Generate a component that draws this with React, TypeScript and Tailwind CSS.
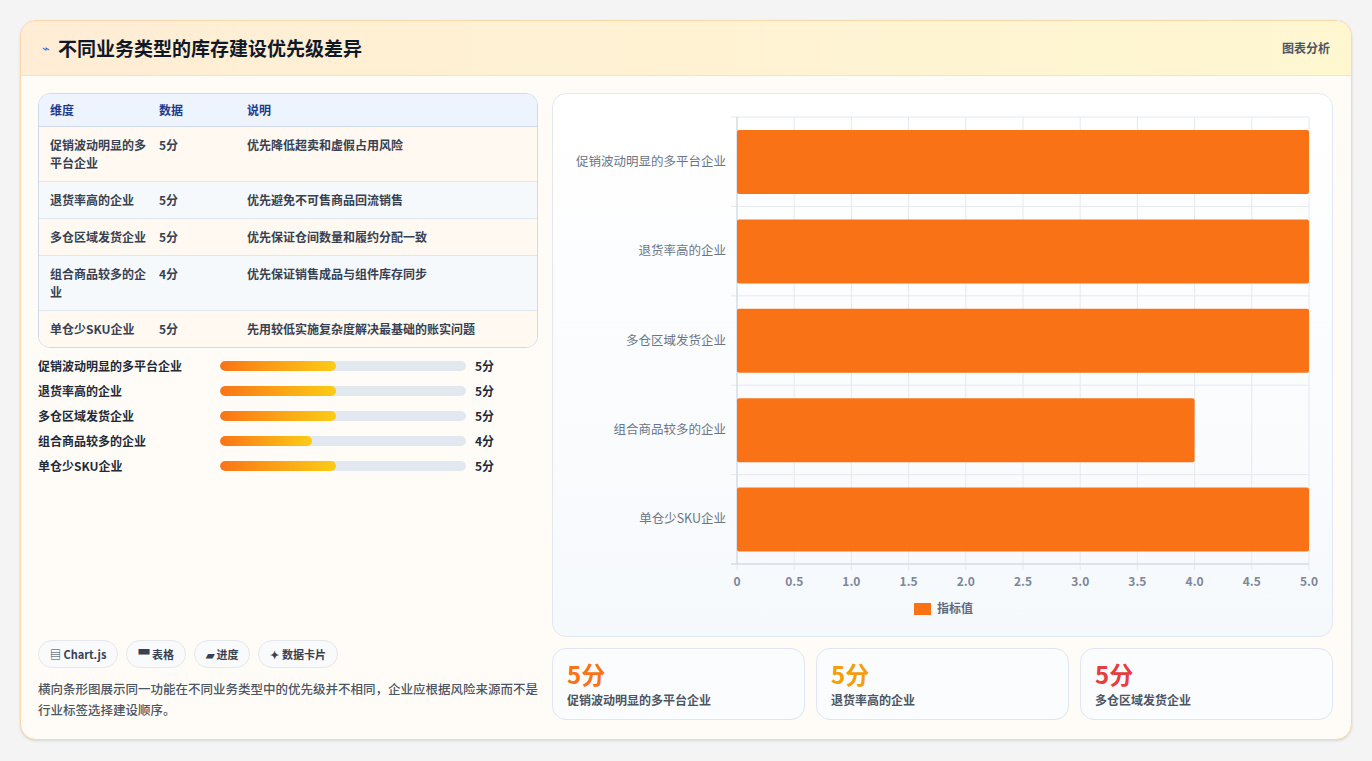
import React from "react";

const rows = [
  ["促销波动明显的多平台企业", "5分", "优先降低超卖和虚假占用风险", 5],
  ["退货率高的企业", "5分", "优先避免不可售商品回流销售", 5],
  ["多仓区域发货企业", "5分", "优先保证仓间数量和履约分配一致", 5],
  ["组合商品较多的企业", "4分", "优先保证销售成品与组件库存同步", 4],
  ["单仓少SKU企业", "5分", "先用较低实施复杂度解决最基础的账实问题", 5],
] as const;

function Chart() {
  const x0 = 184, x1 = 756, y0 = 23, y1 = 470;
  const band = (y1 - y0) / 5;
  const ticks = ["0", "0.5", "1.0", "1.5", "2.0", "2.5", "3.0", "3.5", "4.0", "4.5", "5.0"];
  return (
    <svg width="779" height="542" className="block">
      {ticks.map((t, i) => {
        const x = x0 + ((x1 - x0) * i) / 10;
        return (
          <g key={t}>
            <line x1={x} x2={x} y1={y0} y2={y1 + 6} stroke="#e5e9f0" strokeWidth="1" />
            <text x={x} y={492} textAnchor="middle" fontSize="12" fontWeight="600" fill="#7c8798">{t}</text>
          </g>
        );
      })}
      {[0, 1, 2, 3, 4, 5].map((i) => (
        <line key={i} x1={x0 - 6} x2={x1} y1={y0 + band * i} y2={y0 + band * i} stroke="#e5e9f0" />
      ))}
      <line x1={x0} x2={x0} y1={y0} y2={y1} stroke="#cfd5de" />
      <line x1={x0 - 6} x2={x1} y1={y1} y2={y1} stroke="#cfd5de" />
      {rows.map((r, i) => {
        const y = y0 + band * i + 13;
        const w = ((x1 - x0) * (r[3] as number)) / 5;
        return (
          <g key={i}>
            <rect x={x0} y={y} width={w} height={64} rx="2" fill="#f97316" />
            <text x={x0 - 11} y={y0 + band * i + band / 2 + 4} textAnchor="end" fontSize="12.5" fill="#6b7585">{r[0]}</text>
          </g>
        );
      })}
      <rect x={361} y={509} width={17} height={12} fill="#f97316" />
      <text x={384} y={519} fontSize="12" fontWeight="600" fill="#5f6b7c">指标值</text>
    </svg>
  );
}

export default function App() {
  return (
    <div className="w-[1372px] h-[761px] bg-[#f4f4f5] pt-[20px] pl-[20px]" style={{ fontFamily: '"Noto Sans CJK SC", "Noto Sans", sans-serif' }}>
      <div className="w-[1332px] h-[720px] rounded-[16px] border border-[#fcd9a8] bg-[#fffcf7] overflow-hidden shadow-sm flex flex-col">
        <div className="h-[55px] flex items-center justify-between px-[21px] bg-gradient-to-r from-[#ffedd5] to-[#fef7d0] border-b border-[#f6e3c3]">
          <div className="flex items-center gap-[8px]">
            <span className="text-[#3b6fd8] text-[13px]">⌁</span>
            <span className="text-[19px] font-bold text-[#111827]">不同业务类型的库存建设优先级差异</span>
          </div>
          <span className="text-[12px] font-semibold text-[#4b5563]">图表分析</span>
        </div>
        <div className="flex-1 flex gap-[14px] pl-[17px] pr-[18px] pt-[17px] pb-[19px]">
          <div className="w-[500px] flex flex-col">
            <div className="rounded-[12px] border border-[#cfdbea] overflow-hidden text-[12px]">
              <div className="flex h-[33px] items-center bg-[#edf4fd] border-b border-[#cfdbea] text-[#1e3a8a] font-semibold">
                <div className="w-[120px] pl-[11px]">维度</div>
                <div className="w-[88px]">数据</div>
                <div>说明</div>
              </div>
              {rows.map((r, i) => (
                <div key={i} className={`flex py-[9px] font-semibold text-[#374151] leading-[18px] ${i < 4 ? "border-b border-[#e2e8f0]" : ""} ${i % 2 ? "bg-[#f6f9fc]" : "bg-[#fff9f1]"}`}>
                  <div className="w-[120px] pl-[11px] pr-[6px]">{r[0]}</div>
                  <div className="w-[88px]">{r[1]}</div>
                  <div>{r[2]}</div>
                </div>
              ))}
            </div>
            <div className="mt-[9px] flex flex-col gap-[7px]">
              {rows.map((r, i) => (
                <div key={i} className="flex items-center h-[18px] text-[12px] font-semibold text-[#1f2937]">
                  <div className="w-[182px]">{r[0]}</div>
                  <div className="w-[246px] h-[10px] rounded-full bg-[#e2e8f0] overflow-hidden">
                    <div className="h-full rounded-full bg-gradient-to-r from-[#f97316] to-[#facc15]" style={{ width: (r[3] === 5 ? 116 : 92) + "px" }} />
                  </div>
                  <div className="ml-[9px]">{r[1]}</div>
                </div>
              ))}
            </div>
            <div className="flex-1" />
            <div className="flex gap-[8px] text-[11px] font-semibold text-[#374151]">
              {["▤ Chart.js", "▀ 表格", "▰ 进度", "✦ 数据卡片"].map((t) => (
                <span key={t} className="h-[28px] px-[11px] flex items-center rounded-full border border-[#e5e7eb] bg-[#f8fafc]">{t}</span>
              ))}
            </div>
            <p className="mt-[10px] text-[12.5px] leading-[21px] text-[#4b5563] font-medium">横向条形图展示同一功能在不同业务类型中的优先级并不相同，企业应根据风险来源而不是行业标签选择建设顺序。</p>
          </div>
          <div className="flex-1 flex flex-col gap-[11px]">
            <div className="h-[544px] rounded-[14px] border border-[#e2e8f0] bg-gradient-to-b from-white to-[#f6f9fc] overflow-hidden">
              <Chart />
            </div>
            <div className="flex-1 grid grid-cols-3 gap-[11px]">
              {[["#f97316", rows[0][0]], ["#f59e0b", rows[1][0]], ["#e53e3e", rows[2][0]]].map(([c, l]) => (
                <div key={l} className="rounded-[14px] border border-[#dde6f2] bg-[#fbfcfe] px-[14px] pt-[10px]">
                  <div className="text-[24px] font-bold leading-[30px]" style={{ color: c }}>5分</div>
                  <div className="text-[12px] font-semibold text-[#4b5563] mt-[2px]">{l}</div>
                </div>
              ))}
            </div>
          </div>
        </div>
      </div>
    </div>
  );
}
